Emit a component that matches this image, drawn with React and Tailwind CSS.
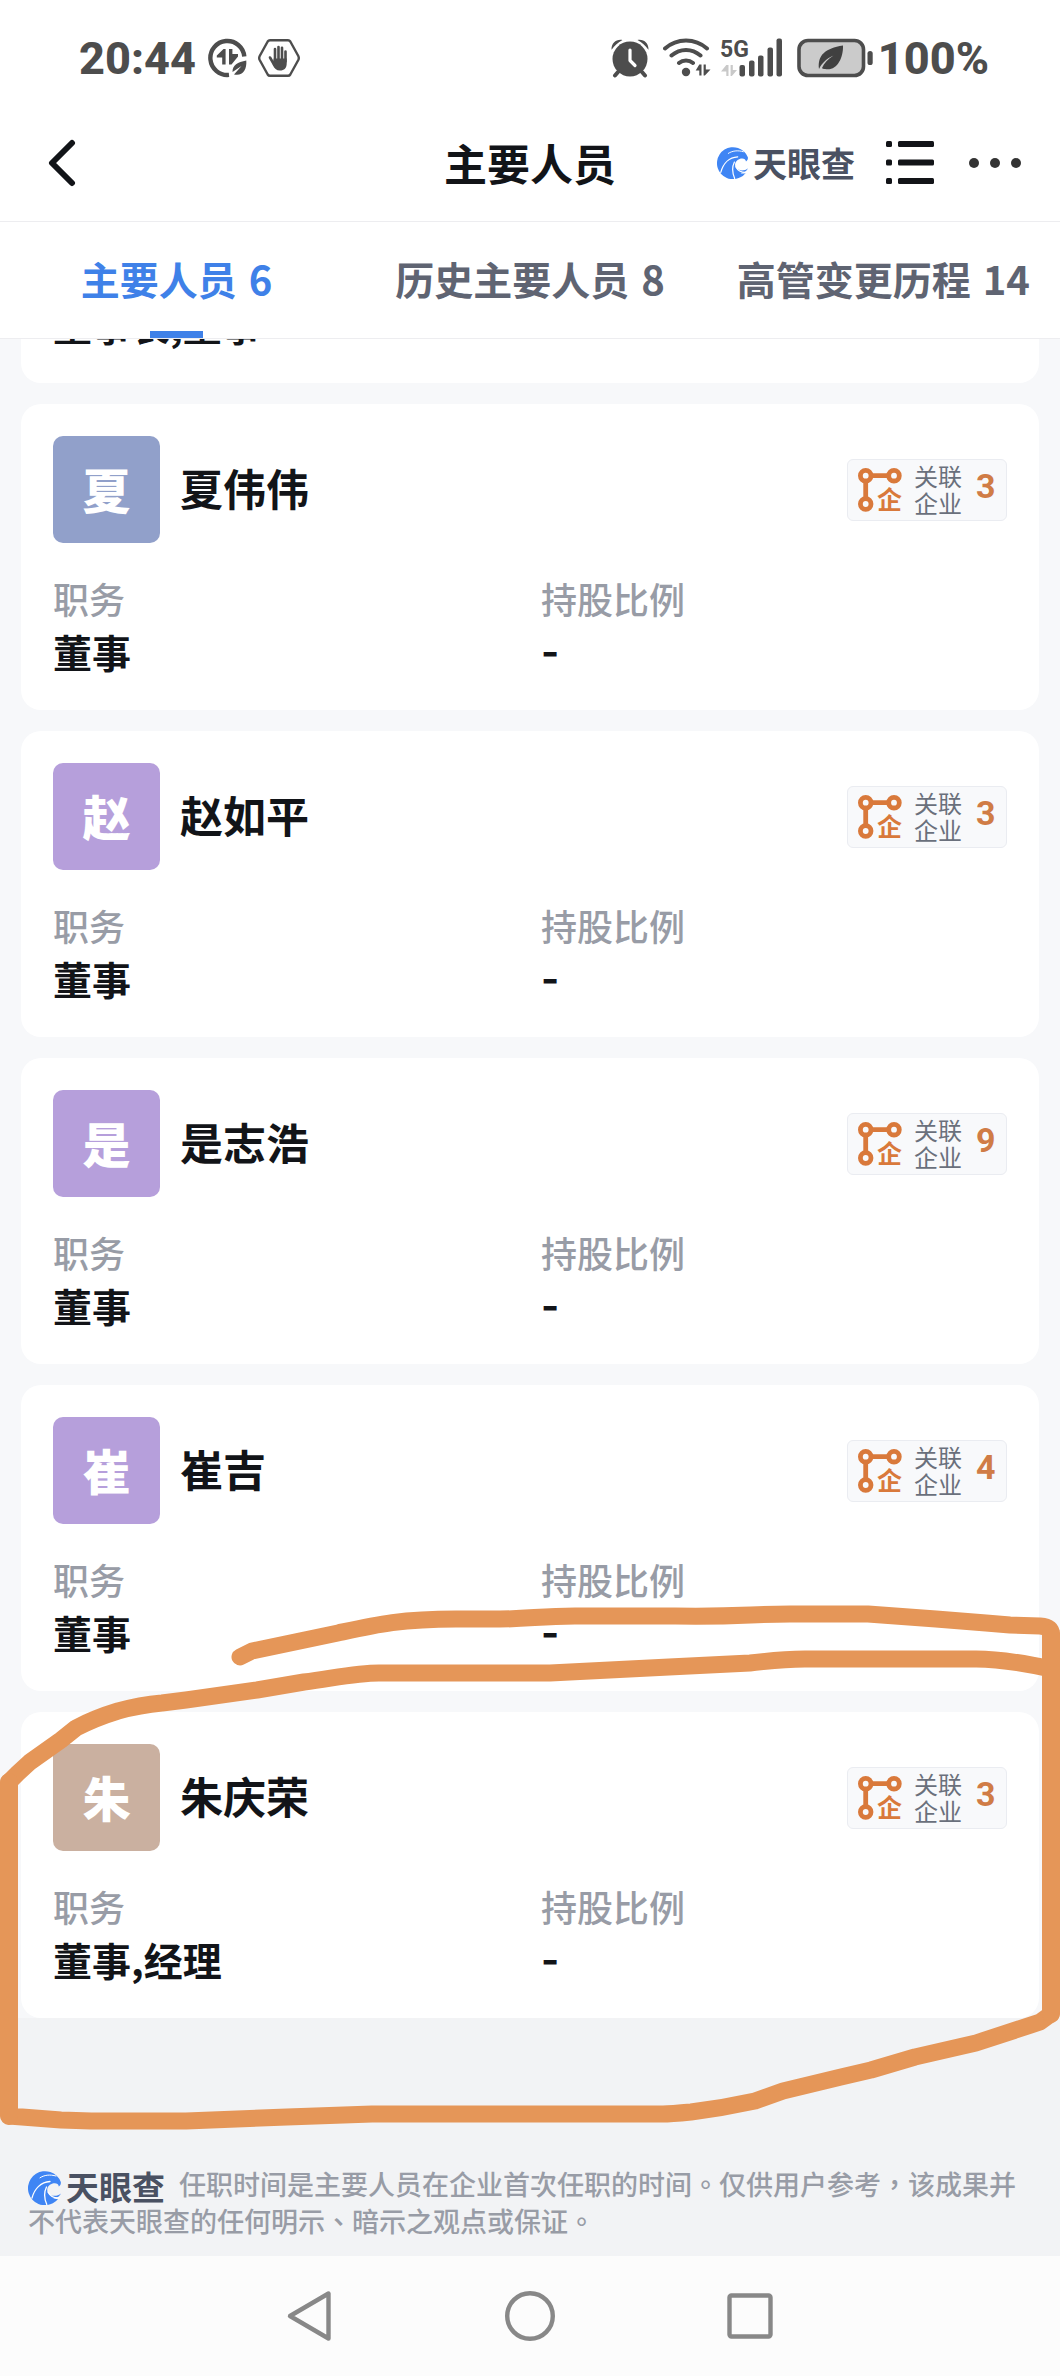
const SANS = 'font-["Noto_Sans_CJK_SC",sans-serif]';

const PEOPLE = [
  { name: "夏伟伟", role: "董事", share: "-", related: 3, tint: "bg-[#91a0ca]" },
  { name: "赵如平", role: "董事", share: "-", related: 3, tint: "bg-[#b69fdb]" },
  { name: "是志浩", role: "董事", share: "-", related: 9, tint: "bg-[#b69fdb]" },
  { name: "崔吉", role: "董事", share: "-", related: 4, tint: "bg-[#b69fdb]" },
  { name: "朱庆荣", role: "董事,经理", share: "-", related: 3, tint: "bg-[#cab0a0]" },
];

const TABS = [
  { label: "主要人员", count: 6 },
  { label: "历史主要人员", count: 8 },
  { label: "高管变更历程", count: 14 },
];

function DataSaverIcon() {
  return (
    <svg className="h-10 w-10" viewBox="0 0 40 40" fill="none" aria-hidden="true">
      <path d="M36.3 18.5A17 17 0 1 0 21 36.9" stroke="#4d4d4d" strokeWidth="4.4" />
      <path d="M17.6 11v15.500h-3.400V19.500H8.800V17.500L15.500 11ZM21 11h3.400v5H30v2.500L23.500 26.500H21Z" fill="#4d4d4d" />
      <path d="M24.500 34c0-7 5-10 13.800-11.500C39 32 34.500 38.500 26 36.500l7.500-8.500Z" fill="#4d4d4d" />
    </svg>
  );
}

function HandIcon() {
  return (
    <svg className="h-10 w-[42px]" viewBox="0 0 42 40" fill="none" aria-hidden="true">
      <path d="M12 2.200h18q1.500 0 2.300 1.300l8 14.500q1 2 0 4l-8 14.500q-.8 1.300-2.300 1.300H12q-1.500 0-2.300-1.300l-8-14.500q-1-2 0-4l8-14.500Q10.500 2.200 12 2.200Z" stroke="#4d4d4d" strokeWidth="2.400" />
      <g stroke="#4d4d4d" strokeWidth="2.600" strokeLinecap="round">
        <path d="M17 11v12M20.500 9v12M24 9.800v12M27.500 13.500v10M12 19.500l4 7" />
      </g>
      <path d="M15.700 20.500h13v5c0 4.500-2.500 7-6.700 7-3.500 0-6-2-7.200-5.500Z" fill="#4d4d4d" />
    </svg>
  );
}

function AlarmIcon() {
  return (
    <svg className="h-10 w-[38px]" viewBox="0 0 38 40" fill="none" aria-hidden="true">
      <g fill="#4d4d4d">
        <circle cx="19" cy="21" r="17.500" />
        <path d="M.5 11.500C.5 5 5 1 11.500 2 7 4.500 3.500 7.500.8 11.500ZM37.500 11.500C37.500 5 33 1 26.500 2c4.500 2.500 8 5.500 10.700 9.500Z" />
      </g>
      <path d="m7 34-3 3.500M31 34l3 3.500" stroke="#4d4d4d" strokeWidth="4" strokeLinecap="round" />
      <path d="M19 12v10.500l5 5" stroke="#fff" strokeWidth="3.200" strokeLinecap="round" strokeLinejoin="round" />
    </svg>
  );
}

function WifiIcon() {
  return (
    <svg className="h-10 w-12" viewBox="0 0 48 40" fill="none" aria-hidden="true">
      <g stroke="#4d4d4d" strokeWidth="4" strokeLinecap="round">
        <path d="M2 10.500C14-.2 32-.2 44 10.500M8.500 17.500C17 10 29 10 37.500 17.500M16 25c4-3.500 10-3.500 14 0" />
      </g>
      <circle cx="23" cy="34" r="4.200" fill="#4d4d4d" />
      <path d="M36.300 26.500h2.200v11h-2.200V32.500H32.700Zm4.300 0h2.200v5h4.700l-5.600 6h-1.300Z" fill="#4d4d4d" />
    </svg>
  );
}

function SignalIcon() {
  return (
    <svg className="h-10 w-[62px] overflow-visible" viewBox="0 0 62 40" aria-hidden="true">
      <text x="-1" y="19" fontFamily="Roboto, sans-serif" fontWeight="700" fontSize="23" fill="#4d4d4d">5G</text>
      <path d="M5.300 27h2.200v11H5.300v-4.500H0Zm4.300 0h2.200v5h4.200l-5.100 6H9.600Z" fill="#c9c9c9" />
      <g fill="#4d4d4d">
        <rect x="18.500" y="27" width="5.500" height="11.500" rx="2" />
        <rect x="28" y="22.500" width="5.500" height="16" rx="2" />
        <rect x="37" y="17.500" width="5.500" height="21" rx="2" />
        <rect x="46.500" y="9.500" width="5.500" height="29" rx="2" />
        <rect x="55.500" y=".5" width="5.500" height="38" rx="2" />
      </g>
    </svg>
  );
}

function BatteryIcon() {
  return (
    <svg className="h-10 w-[77px]" viewBox="0 0 77 40" aria-hidden="true">
      <rect x="2" y="2.500" width="64.500" height="35" rx="9" fill="#cbcbcb" stroke="#4d4d4d" strokeWidth="3.600" />
      <rect x="70.500" y="13" width="5.200" height="14" rx="2.600" fill="#4d4d4d" />
      <path d="M22 31c-1.500-14 6-20.500 24-23.500.5 13-6.500 26-18 23.500-1.500 0-2.500-.2-3-1 2-5 6-9 11.500-12.500C29.500 20.500 25 25 22 31Z" fill="#404040" />
    </svg>
  );
}

function LogoMark({ className }) {
  return (
    <svg className={className} viewBox="0 0 34 34" fill="none" aria-hidden="true">
      <path d="M32.800 11A17 17 0 1 0 30.500 27.500c-1.500.6-3.500.8-5.500.3 3.500-.3 6.500-2.300 8-5.300-3 2.500-7.500 3.200-11 1.200-4.500-3-3.500-9 2-11 3.500-1.200 6.500-.2 6.800 2.800 1.500-.8 2.300-2.500 2-4.500Z" fill="#3f85f4" />
      <g stroke="#fff" strokeLinecap="round">
        <path d="M28 5c-6-1.800-12-1-16 1.800" strokeWidth="1" />
        <path d="M22 10.500C13 11 6.500 17.500 4 27" strokeWidth="1.300" />
        <path d="M18.500 16c-2.500 5-2.500 11 .3 17.500" strokeWidth="1.300" />
        <path d="M20 21c2 4 5 6.300 11 6" strokeWidth="1.300" />
      </g>
    </svg>
  );
}

function RelationIcon() {
  return (
    <svg className="h-11 w-11 overflow-visible" viewBox="0 0 44 44" fill="none" aria-hidden="true">
      <g stroke="#d9793b" strokeWidth="4.800">
        <circle cx="7.700" cy="7.700" r="5.300" />
        <circle cx="36" cy="7.700" r="5.300" />
        <circle cx="7.700" cy="36" r="5.300" />
        <path d="M13 7.700h17.500M7.700 13v17.500" />
      </g>
      <text x="19" y="41" fontFamily="Noto Sans CJK SC, sans-serif" fontWeight="700" fontSize="25" fill="#d9793b">企</text>
    </svg>
  );
}

function StatusBar() {
  return (
    <div className="flex h-[108px] items-center pt-2 pr-[71px] pl-[79px] font-[Roboto,sans-serif] text-[45px] leading-none font-extrabold text-[#4d4d4d]">
      <span>20:44</span>
      <span className="ml-3 flex items-center gap-[10px]">
        <DataSaverIcon />
        <HandIcon />
      </span>
      <span className="ml-auto flex items-center">
        <AlarmIcon />
        <span className="ml-3.5"><WifiIcon /></span>
        <span className="ml-2.5"><SignalIcon /></span>
        <span className="ml-3.5"><BatteryIcon /></span>
        <span className="ml-1">100%</span>
      </span>
    </div>
  );
}

function Header() {
  return (
    <header className="grid h-[114px] grid-cols-[1fr_auto_1fr] items-center border-b border-[#ededf0] px-[38px] pb-1">
      <button type="button" aria-label="返回" className="justify-self-start pl-1.5">
        <svg className="h-12 w-9" viewBox="0 0 36 48" fill="none" stroke="#121418" strokeWidth="6" strokeLinecap="round" strokeLinejoin="round">
          <path d="M28 4 8 24l20 20" />
        </svg>
      </button>
      <h1 className="text-[43px] leading-none font-bold text-[#121418]">主要人员</h1>
      <div className="flex items-center justify-self-end">
        <LogoMark className="h-8 w-8" />
        <span className="ml-1 text-[34px] leading-none font-bold text-[#4a5162]">天眼查</span>
        <button type="button" aria-label="目录" className="ml-[31px]">
          <svg className="h-11 w-12" viewBox="0 0 48 44" fill="#121418">
            <rect width="6" height="6" rx="1.500" />
            <rect x="12" width="36" height="6" rx="1.500" />
            <rect y="18.500" width="6" height="6" rx="1.500" />
            <rect x="12" y="18.500" width="36" height="6" rx="1.500" />
            <rect y="37" width="6" height="6" rx="1.500" />
            <rect x="12" y="37" width="36" height="6" rx="1.500" />
          </svg>
        </button>
        <button type="button" aria-label="更多" className="ml-[34px]">
          <svg className="h-11 w-[54px]" viewBox="0 0 54 44" fill="#333">
            <circle cx="6" cy="22" r="5" />
            <circle cx="27" cy="22" r="5" />
            <circle cx="48" cy="22" r="5" />
          </svg>
        </button>
      </div>
    </header>
  );
}

function Tabs() {
  return (
    <nav className="grid h-[117px] grid-cols-3 border-b border-[#ededf0] bg-white">
      {TABS.map((tab, i) => (
        <button
          key={tab.label}
          type="button"
          className={
            i === 0
              ? "flex flex-col items-center text-[#3f81e8]"
              : "flex flex-col items-center text-[#5f6472]"
          }
        >
          <span className="flex flex-1 items-center gap-3 pb-1 text-[39px] leading-none font-bold whitespace-nowrap">
            {tab.label}
            <span className="text-[40px]">{tab.count}</span>
          </span>
          <span className={i === 0 ? "-mt-[7px] h-[7px] w-[53px] bg-[#3f81e8]" : "hidden"} />
        </button>
      ))}
    </nav>
  );
}

function PersonCard({ person }) {
  return (
    <article className="rounded-[20px] bg-white p-8">
      <div className="flex items-center">
        <div className={`${person.tint} flex h-[107px] w-[107px] items-center justify-center rounded-[10px] pb-1 text-[48px] leading-none font-black text-white`}>
          {person.name[0]}
        </div>
        <h2 className="ml-5 pb-1 text-[43px] leading-none font-bold text-[#121418]">{person.name}</h2>
        <button
          type="button"
          className="ml-auto flex h-[62px] w-40 items-center rounded-md border border-[#eaecf1] bg-[#f8f9fb] pl-2.5 text-left"
        >
          <RelationIcon />
          <span className="ml-3 flex flex-col pb-0.5 text-[24px] leading-[27px] text-[#6a707c]">
            <span>关联</span>
            <span>企业</span>
          </span>
          <span className="ml-3.5 pb-2 font-[Roboto,sans-serif] text-[34px] leading-none font-bold text-[#d07c46]">{person.related}</span>
        </button>
      </div>
      <dl className="mt-7 grid grid-cols-2 gap-x-[22px]">
        <div>
          <dt className="text-[36px] leading-[54px] font-medium text-[#989ca6]">职务</dt>
          <dd className="text-[39px] leading-[53px] font-bold text-[#121418]">{person.role}</dd>
        </div>
        <div>
          <dt className="text-[36px] leading-[54px] font-medium text-[#989ca6]">持股比例</dt>
          <dd className="font-[Inter,sans-serif] text-[39px] leading-[53px] font-bold text-[#121418]">{person.share}</dd>
        </div>
      </dl>
    </article>
  );
}

function Footer() {
  return (
    <footer className='bg-[#f2f3f5] px-7 pt-[147px] pb-[17px] font-["Noto_Sans_CJK_TC",sans-serif]'>
      <p className="text-[27px] leading-[37px] font-medium text-[#989ca6]">
        <span className="-my-2 mr-3.5 inline-flex items-center gap-1 align-middle leading-none">
          <LogoMark className="h-[34px] w-[34px]" />
          <span className="pb-1 text-[33px] leading-[34px] font-bold text-[#4a5162]">天眼查</span>
        </span>
        任职时间是主要人员在企业首次任职的时间。仅供用户参考，该成果并不代表天眼查的任何明示、暗示之观点或保证。
      </p>
    </footer>
  );
}

function SystemNav() {
  return (
    <nav className="flex h-[120px] items-center justify-center gap-[168px] bg-[#fcfcfc]">
      <button type="button" aria-label="后退">
        <svg className="h-[52px] w-[52px]" viewBox="0 0 52 52" fill="none" stroke="#888" strokeWidth="4.400" strokeLinejoin="round">
          <path d="M44.500 3.500v45L6 26Z" />
        </svg>
      </button>
      <button type="button" aria-label="主页">
        <svg className="h-[52px] w-[52px]" viewBox="0 0 52 52" fill="none" stroke="#888" strokeWidth="4.400">
          <circle cx="26" cy="26" r="22.800" />
        </svg>
      </button>
      <button type="button" aria-label="最近任务">
        <svg className="h-[52px] w-[52px]" viewBox="0 0 52 52" fill="none" stroke="#888" strokeWidth="4.400">
          <rect x="5.500" y="5.500" width="41" height="41" rx="2" />
        </svg>
      </button>
    </nav>
  );
}

/* Hand-drawn marker loop around the last person in the list. */
function MarkerLoop() {
  return (
    <svg
      className="pointer-events-none absolute inset-x-0 top-[1600px] w-full"
      viewBox="0 1600 1060 540"
      fill="none"
      stroke="#e59658"
      strokeWidth="17"
      strokeLinecap="round"
      strokeLinejoin="round"
      aria-hidden="true"
    >
      <path d="M240 1657 252 1651 338 1633C375 1625 400 1619 456 1619H500C530 1619 540 1616 575 1616H675C740 1617 750 1614 790 1614H868L936 1619 986 1623 1010 1625 1040 1626Q1051 1627 1051 1633V2014L1040 2022 976 2043 915 2057 871 2070 841 2077 783 2091 755 2101Q723 2108 691 2112 670 2114 663 2114H372L287 2117 186 2121H91L61 2120 9 2116V1782L18 1773 30 1762 61 1740 76 1728Q95 1718 118 1711 140 1705 162 1703L186 1700 257 1690 304 1682C340 1677 358 1673 379 1673H550L669 1667 750 1663C770 1661 780 1659 805 1659H976Q1005 1659 1051 1669" />
      <path d="M1051 1633V2014M9 2116V1782" strokeWidth="18" />
    </svg>
  );
}

export default function App() {
  return (
    <div className={`${SANS} relative min-h-screen overflow-hidden bg-white`}>
      <StatusBar />
      <Header />
      <Tabs />
      <main className="bg-[#f7f8fa] px-[21px]">
        <section className="flex h-11 flex-col justify-end overflow-hidden rounded-b-[20px] bg-white px-8 pb-8">
          <p className="shrink-0 text-[39px] leading-[53px] font-bold text-[#121418]">董事长,董事</p>
        </section>
        <div className="mt-[21px] flex flex-col gap-[21px]">
          {PEOPLE.map((person) => (
            <PersonCard key={person.name} person={person} />
          ))}
        </div>
      </main>
      <Footer />
      <SystemNav />
      <MarkerLoop />
    </div>
  );
}
